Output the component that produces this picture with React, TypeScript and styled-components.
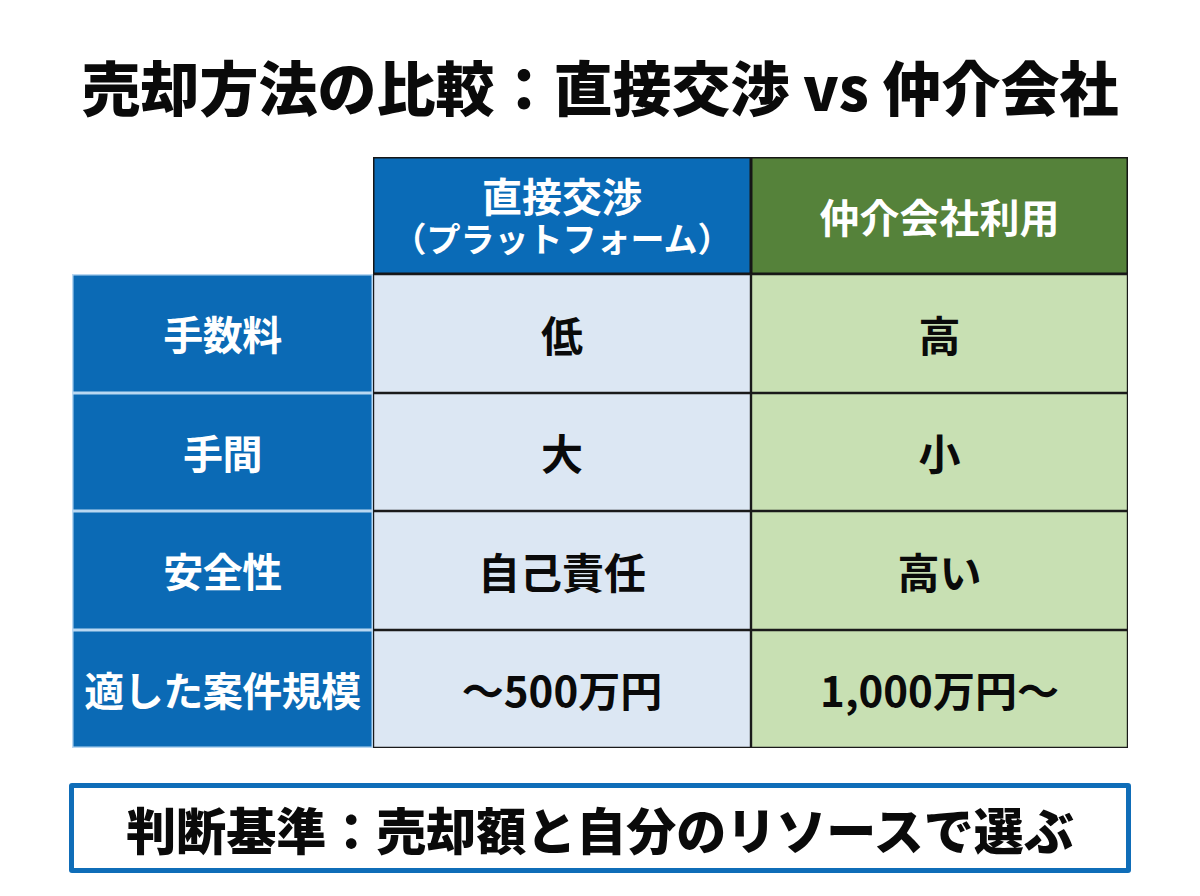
import React from "react";
import styled, { createGlobalStyle } from "styled-components";

const GlobalStyle = createGlobalStyle`
  html, body {
    margin: 0;
    padding: 0;
    background: #ffffff;
  }
  body {
    font-family: "Noto Sans CJK JP", "Noto Sans", sans-serif;
  }
`;

const Page = styled.div`
  width: 1200px;
  height: 896px;
  display: flex;
  flex-direction: column;
  align-items: center;
  padding-top: 52px;
  box-sizing: border-box;
  background: #ffffff;
`;

const Title = styled.h1`
  margin: 0 0 38px;
  font-size: 59px;
  line-height: 67px;
  font-weight: 900;
  color: #0a0a0a;
  letter-spacing: 0;
  white-space: nowrap;
`;

const Grid = styled.div`
  display: grid;
  grid-template-columns: 301px 378px 377px;
  grid-template-rows: 117px repeat(4, 118.5px);
`;

const Corner = styled.div`
  background: #ffffff;
`;

const HeadCell = styled.div<{ $tone: "blue" | "green" }>`
  display: flex;
  flex-direction: column;
  align-items: center;
  justify-content: center;
  background: ${(p) => (p.$tone === "blue" ? "#0a6bb7" : "#55823a")};
  box-shadow: inset 0 0 0 1.5px #161616;
  color: #ffffff;
  font-weight: 700;
`;

const HeadMain = styled.span`
  font-size: 40px;
  line-height: 44px;
`;

const HeadSub = styled.span`
  font-size: 34px;
  line-height: 42px;
`;

const LabelCell = styled.div`
  display: flex;
  align-items: center;
  justify-content: center;
  background: #0b6ab5;
  box-shadow: inset 0 0 0 1.5px #b9d7f1;
  color: #ffffff;
  font-size: 40px;
  font-weight: 700;
  letter-spacing: -0.5px;
  white-space: nowrap;
`;

const DataCell = styled.div<{ $tone: "blue" | "green" }>`
  display: flex;
  align-items: center;
  justify-content: center;
  background: ${(p) => (p.$tone === "blue" ? "#dce7f3" : "#c8e0b3")};
  box-shadow: inset 0 0 0 1.2px #1a1a1a;
  color: #0a0a0a;
  font-size: 42px;
  font-weight: 700;
  white-space: nowrap;
`;

const Summary = styled.div`
  margin-top: 35px;
  width: 1062px;
  height: 90px;
  box-sizing: border-box;
  border: 5px solid #0f6db8;
  border-radius: 3px;
  display: flex;
  align-items: center;
  justify-content: center;
  font-size: 50px;
  font-weight: 900;
  color: #0a0a0a;
  white-space: nowrap;
`;

const rows: [string, string, string][] = [
  ["手数料", "低", "高"],
  ["手間", "大", "小"],
  ["安全性", "自己責任", "高い"],
  ["適した案件規模", "〜500万円", "1,000万円〜"],
];

export default function App() {
  return (
    <>
      <GlobalStyle />
      <Page>
        <Title>売却方法の比較：直接交渉 vs 仲介会社</Title>
        <Grid>
          <Corner />
          <HeadCell $tone="blue">
            <HeadMain>直接交渉</HeadMain>
            <HeadSub>（プラットフォーム）</HeadSub>
          </HeadCell>
          <HeadCell $tone="green">
            <HeadMain>仲介会社利用</HeadMain>
          </HeadCell>
          {rows.map(([label, a, b]) => (
            <React.Fragment key={label}>
              <LabelCell>{label}</LabelCell>
              <DataCell $tone="blue">{a}</DataCell>
              <DataCell $tone="green">{b}</DataCell>
            </React.Fragment>
          ))}
        </Grid>
        <Summary>判断基準：売却額と自分のリソースで選ぶ</Summary>
      </Page>
    </>
  );
}
